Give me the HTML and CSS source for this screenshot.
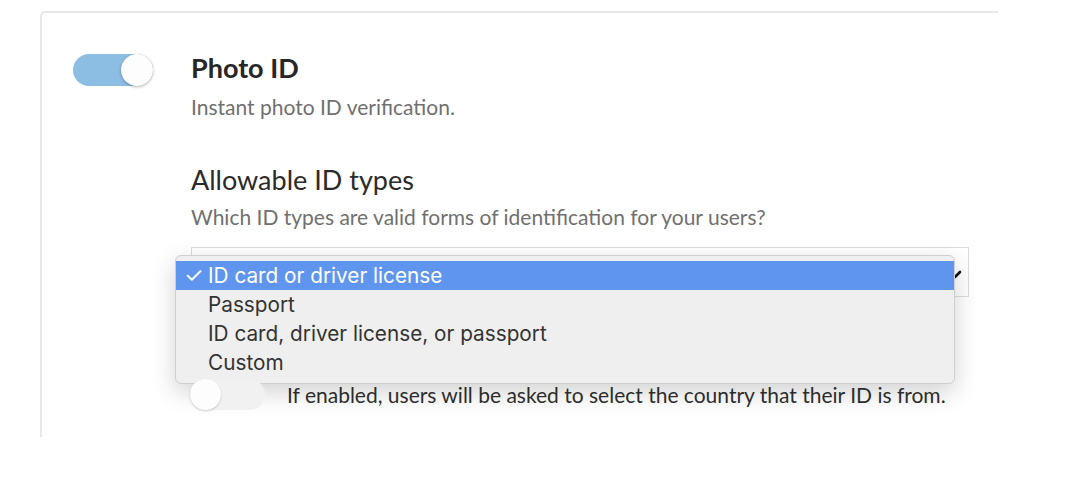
FILE: index.html
```html
<!DOCTYPE html>
<html>
<head>
<meta charset="utf-8">
<link rel="stylesheet" href="styles.css">
</head>
<body>
<div class="card">
  <div class="feature">
    <div class="toggle toggle-on"><span class="knob"></span></div>
    <div class="content">
      <h2 class="title">Photo ID</h2>
      <p class="desc">Instant photo ID verification.</p>

      <h3 class="subtitle">Allowable ID types</h3>
      <p class="desc desc-tight">Which ID types are valid forms of identification for your users?</p>

      <div class="select-wrap">
        <div class="select">
          <span class="chev">
            <svg width="14" height="9" viewBox="0 0 14 9"><path d="M2 2 L7 7 L12 2" fill="none" stroke="#111" stroke-width="2.6" stroke-linecap="round" stroke-linejoin="round"/></svg>
          </span>
        </div>
        <ul class="menu">
          <li class="item selected"><span class="check">✓</span>ID card or driver license</li>
          <li class="item"><span class="check"></span>Passport</li>
          <li class="item"><span class="check"></span>ID card, driver license, or passport</li>
          <li class="item"><span class="check"></span>Custom</li>
        </ul>
      </div>

      <div class="option-row">
        <div class="toggle toggle-off small"><span class="knob"></span></div>
        <p class="option-text">If enabled, users will be asked to select the country that their ID is from.</p>
      </div>
    </div>
  </div>
</div>
</body>
</html>
```

FILE: styles.css
```css
html, body {
  margin: 0;
  padding: 0;
  background: #ffffff;
}

body {
  font-family: Lato, "Liberation Sans", sans-serif;
  color: #2b2b2b;
}

.card {
  margin: 11px 0 0 40px;
  width: 958px;
  height: 426px;
  box-sizing: border-box;
  border-top: 2px solid #e8e8e8;
  border-left: 2px solid #e8e8e8;
  border-top-left-radius: 5px;
  padding: 39px 0 0 31px;
}

.feature {
  display: flex;
  align-items: flex-start;
  gap: 38px;
}

.toggle {
  position: relative;
  flex: none;
  width: 80px;
  height: 32px;
  border-radius: 16px;
  box-sizing: border-box;
}

.toggle-on {
  background: #8cbde3;
  margin-top: 2px;
}

.toggle-off {
  background: #f1f1f1;
}

.toggle.small {
  width: 75px;
  height: 31px;
}

.knob {
  position: absolute;
  top: 0;
  width: 32px;
  height: 32px;
  border-radius: 50%;
  background: #fdfdfd;
  box-shadow: 0 1px 3px rgba(0, 0, 0, 0.3);
}

.toggle-on .knob {
  right: 0;
}

.toggle-off .knob {
  left: 0;
  width: 31px;
  height: 31px;
  box-shadow: 0 1px 2px rgba(0, 0, 0, 0.2);
}

.content {
  width: 778px;
}

.title {
  margin: 0;
  font-size: 27px;
  font-weight: 700;
  line-height: 32px;
  color: #262626;
}

.desc {
  margin: 10px 0 0;
  font-size: 21px;
  line-height: 26px;
  color: #707070;
}

.desc-tight {
  margin-top: 8px;
}

.subtitle {
  margin: 44px 0 0;
  font-size: 27px;
  font-weight: 400;
  line-height: 32px;
  color: #2b2b2b;
}

.select-wrap {
  position: relative;
  margin-top: 17px;
}

.select {
  height: 50px;
  border: 1px solid #dcdcdc;
  box-sizing: border-box;
  display: flex;
  align-items: center;
  justify-content: flex-end;
  padding-right: 6px;
}

.chev {
  display: flex;
  margin-top: 4px;
}

.menu {
  position: absolute;
  left: -16px;
  top: 8px;
  width: 780px;
  margin: 0;
  padding: 5px 0;
  height: 129px;
  box-sizing: border-box;
  list-style: none;
  background: #efefef;
  border: 1px solid #cfcfcf;
  border-radius: 6px;
  box-shadow: 0 8px 24px rgba(0, 0, 0, 0.18);
  font-family: Inter, "Noto Sans", sans-serif;
  font-size: 20.75px;
  color: #333333;
}

.item {
  height: 29px;
  line-height: 29px;
  display: flex;
  align-items: center;
  padding-left: 8px;
}

.item.selected {
  background: #5f95ef;
  color: #ffffff;
}

.check {
  width: 24px;
  flex: none;
  font-size: 22px;
}

.option-row {
  display: flex;
  align-items: center;
  gap: 22px;
  margin-top: 82px;
  margin-left: -1px;
}

.option-text {
  margin: 0;
  font-size: 21px;
  line-height: 26px;
  color: #303030;
}
```
